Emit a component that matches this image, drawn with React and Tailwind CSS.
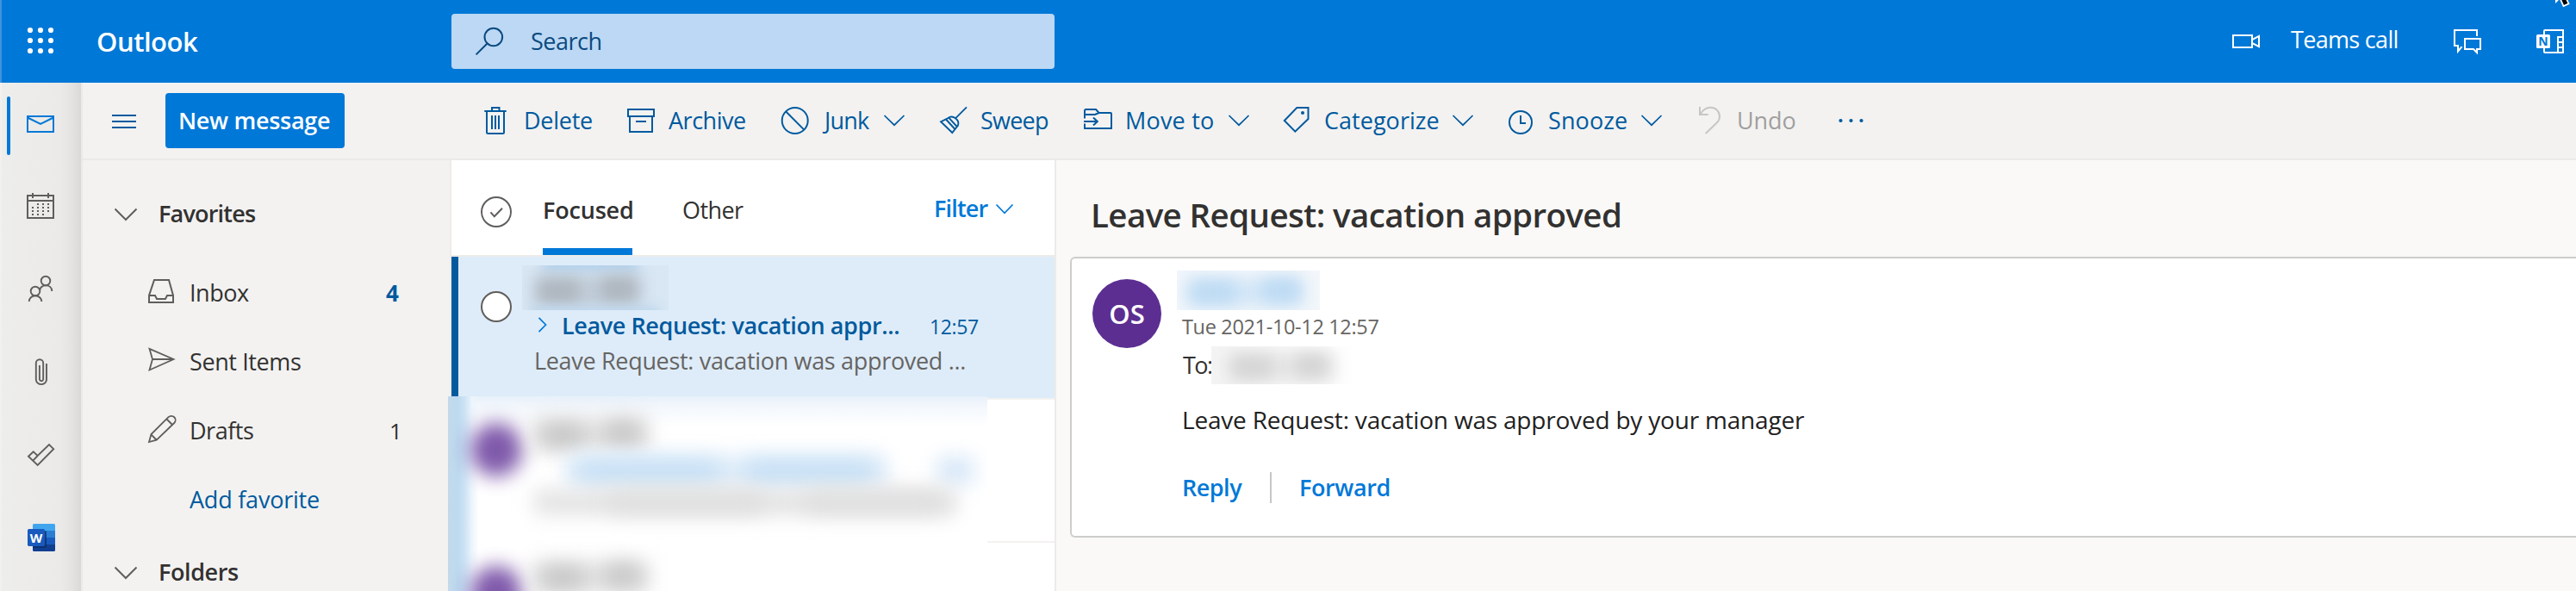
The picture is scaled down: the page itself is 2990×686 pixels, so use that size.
import React from "react";

// Icons share one drawing grid: `box` is "x y width height" on that grid.
function Icon({ box, stroke = 2, className = "", children }) {
  const [, , w, h] = box.split(" ");
  return (
    <svg
      viewBox={box}
      width={w}
      height={h}
      fill="none"
      stroke="currentColor"
      strokeWidth={stroke}
      className={`block shrink-0 ${className}`}
      aria-hidden="true"
    >
      {children}
    </svg>
  );
}

function Chevron({ className = "" }) {
  return (
    <Icon box="0 0 26 40" stroke={1.7} className={className}>
      <path d="M1.5 14L13 25.2L24.5 14" />
    </Icon>
  );
}

function Header() {
  return (
    <header className="relative flex h-24 shrink-0 items-center overflow-hidden border-l-2 border-[#3f93df] bg-[#0078d7] text-white">
      <Icon box="2 24 94 48" stroke={0}>
        {[35, 47, 59].map((y) =>
          [35, 47, 59].map((x) => <circle key={`${x}-${y}`} cx={x} cy={y} r="3.1" fill="currentColor" />)
        )}
      </Icon>
      <span className="ml-4 w-[412px] shrink-0 text-[31px] leading-[42px] font-semibold tracking-[-0.47px]">Outlook</span>
      <div className="flex h-16 w-[700px] shrink-0 items-center rounded bg-[#bcd8f4] text-[#0b4a80]">
        <Icon box="550 28 38 40" className="ml-[26px]">
          <circle cx="572.8" cy="43" r="10.3" />
          <path d="M565.5 50.5L552.6 63.4" />
        </Icon>
        <span className="ml-[28px] text-[27px] leading-10 tracking-[-0.49px]">Search</span>
      </div>
      <Icon box="2588 28 38 40" className="ml-[1364px]">
        <path d="M2592 41H2614V55H2592ZM2614.5 45.8L2622 41.8V54.2L2614.5 50.2" />
      </Icon>
      <span className="-mt-1 ml-[33px] w-[187px] shrink-0 text-[27px] leading-10 tracking-[-0.68px]">Teams call</span>
      <Icon box="2846 28 38 40">
        <path d="M2875 42V35H2849V53H2853V59.5L2857.6 54.2" />
        <path d="M2861 45H2879V57H2875V61L2871 57H2861Z" />
      </Icon>
      <Icon box="2942 28 36 40" className="ml-[58px]">
        <path d="M2953 40V36Q2953 35 2954 35H2975V61H2954Q2953 61 2953 60V56M2969 61V43H2975M2969 49H2975M2969 55H2975" />
        <rect x="2944" y="40" width="16" height="16" rx="1.5" fill="#fff" stroke="none" />
        <text x="2952" y="53" fontSize="14" fontWeight="700" textAnchor="middle" fill="#0078d7" stroke="none">
          N
        </text>
      </Icon>
      <svg viewBox="0 0 24 12" width="24" height="12" className="absolute top-0 left-[2958px]" aria-hidden="true">
        <path d="M6 0V4L10 0Z" fill="#fff" />
        <path d="M11 -3L15.5 7L21.5 4.2L17.5 -4Z" fill="#000" stroke="#fff" strokeWidth="1.8" />
      </svg>
    </header>
  );
}

function AppRail() {
  return (
    <nav className="flex w-24 shrink-0 flex-col border-r-2 border-l-2 border-r-[#ebeae9] border-l-[#f2f1f0] bg-[linear-gradient(to_right,#ededeb_0px,#ebeae8_68px,#e5e4e2_80px,#dad9d7_92px)] text-[#605e5c]">
      <div className="flex h-24 items-center text-[#0078d7]">
        <div className="mt-1 ml-1.5 h-[68px] w-1 rounded-full bg-[#0078d7]" />
        <Icon box="12 96 82 96">
          <path d="M32 135H62V153H32ZM32 136.5L47 144L62 136.5" />
        </Icon>
      </div>
      <Icon box="2 192 92 96">
        <path d="M32 227H62V253H32ZM32 233H62M38 224V230M56 224V230" />
        <path d="M43 237H57M37 241H57M37 245H57M37 249H51" strokeDasharray="2 4" />
      </Icon>
      <Icon box="2 288 92 96" stroke={1.9}>
        <circle cx="53" cy="326" r="5.3" />
        <circle cx="41" cy="338" r="5.3" />
        <path d="M33.7 350A7.3 6.7 0 0 1 48.3 350M46.2 337C46.2 329.8 60.3 329 60.3 338" />
      </Icon>
      <Icon box="2 384 92 96" stroke={1.9}>
        <path d="M54 422V441A6.2 6.2 0 0 1 41.8 441V421.5A4.2 4.2 0 0 1 50.2 421.5V440.5A2.2 2.2 0 0 1 45.9 440.5V424" />
      </Icon>
      <Icon box="2 480 92 96" stroke={1.9}>
        <path d="M33 529.7L38.7 524.3L43.7 529L57 516L62.2 521.2L43.7 540ZM43.7 529L38.3 534.6" />
      </Icon>
      <Icon box="2 576 92 96" stroke={0}>
        <path d="M38 616V609.5Q38 608 39.5 608H62.5Q64 608 64 609.5V616Z" fill="#41a5ee" />
        <path d="M38 616H64V624H38Z" fill="#2b7cd3" />
        <path d="M38 624H64V632H38Z" fill="#185abd" />
        <path d="M38 632H64V638.5Q64 640 62.5 640H39.5Q38 640 38 638.5Z" fill="#103f91" />
        <path d="M38 616H52Q54 616 54 618V634Q54 636 52 636H38Z" fill="#0b2d66" opacity="0.75" />
        <rect x="32" y="614" width="20" height="20" rx="1.7" fill="#185abd" />
        <text x="42" y="629.5" fontSize="15" fontWeight="700" textAnchor="middle" fill="#fff">
          W
        </text>
      </Icon>
    </nav>
  );
}

function Toolbar() {
  return (
    <div className="flex h-[90px] shrink-0 items-center border-b-2 border-[#ebeae8] bg-[#f3f2f1] text-[27px] leading-10 whitespace-nowrap text-[#005a9e]">
      <Icon box="96 120 96 40" stroke={1.8}>
        <path d="M130 134H158M130 141H158M130 148H158" />
      </Icon>
      <button className="flex h-16 w-[208px] shrink-0 items-center rounded bg-[#0078d7] pl-[15px] font-semibold tracking-[-0.3px] text-white">
        New message
      </button>
      <Icon box="560 120 32 40" className="ml-40">
        <path d="M562.3 129H587.7M571 128.5V125H579.5V128.5M565 129V153.5Q565 155 566.5 155H583.5Q585 155 585 153.5V129M571 134V150M575 134V150M579 134V150" />
      </Icon>
      <span className="ml-4 w-[120px] shrink-0 tracking-[-0.27px]">Delete</span>
      <Icon box="728 120 32 40">
        <path d="M729 127H759V135H729ZM731 135V153H757V135M738 141H750" />
      </Icon>
      <span className="ml-4 w-[130px] shrink-0 tracking-[-0.48px]">Archive</span>
      <Icon box="906 120 34 40">
        <circle cx="922.7" cy="140" r="15" />
        <path d="M912 129.3L933.3 150.6" />
      </Icon>
      <span className="ml-[17px] w-[68px] shrink-0 tracking-[-0.79px]">Junk</span>
      <Chevron />
      <Icon box="1090 120 34 40" stroke={1.9} className="ml-[39px]">
        <path d="M1122 124.3L1109.5 136.8M1092 141.3L1100.5 137C1106 132.5 1114 139.5 1112 145.5L1105.3 154ZM1098 138.5L1108.5 150M1101.5 136.8L1110.8 147" />
      </Icon>
      <span className="ml-[14px] w-[118px] shrink-0 tracking-[-0.76px]">Sweep</span>
      <Icon box="1256 120 36 40">
        <path d="M1259 137.5V128.5Q1259 127 1260.5 127H1272L1275.5 131H1289Q1290 131 1290 132V149H1259V143.5M1259 133H1271L1275.5 131M1258 141H1273.5M1269 136.5L1273.8 141L1269 145.5" />
      </Icon>
      <span className="ml-[14px] w-[119px] shrink-0 tracking-[0.2px]">Move to</span>
      <Chevron />
      <Icon box="1488 120 34 40" className="ml-[37px]">
        <path d="M1505.3 125H1518.5V138L1503.3 152.6L1490.8 140Z" />
        <circle cx="1512" cy="131" r="2" fill="currentColor" stroke="none" />
      </Icon>
      <span className="ml-[15px] w-[148px] shrink-0 tracking-[0.03px]">Categorize</span>
      <Chevron />
      <Icon box="1750 120 32 40" className="ml-[39px]">
        <circle cx="1765" cy="142" r="13" />
        <path d="M1765 134V143H1771" />
      </Icon>
      <span className="ml-[15px] w-[107px] shrink-0 tracking-[0.1px]">Snooze</span>
      <Chevron />
      <Icon box="1970 120 30 40" className="ml-10 text-[#c8c6c4]">
        <path d="M1973 124V133H1982.7M1973.5 132.5C1977 127 1981.5 124.8 1985.5 124.8C1991.5 124.8 1996 129.5 1996 135C1996 138 1995 140.2 1993 142.2L1979.7 155" />
      </Icon>
      <span className="ml-4 w-[116px] shrink-0 tracking-[-0.09px] text-[#a19f9d]">Undo</span>
      <Icon box="2132 120 32 40" stroke={0}>
        {[2136.5, 2148.5, 2160.5].map((x) => (
          <circle key={x} cx={x} cy="140" r="2.1" fill="currentColor" />
        ))}
      </Icon>
    </div>
  );
}

function FolderPane() {
  return (
    <aside className="flex w-[426px] shrink-0 flex-col overflow-hidden bg-[#f3f2f1] pt-[22px] text-[27px] leading-10 whitespace-nowrap text-[#323130]">
      <div className="flex h-20 shrink-0 items-center font-semibold">
        <Icon box="132 208 28 80" className="ml-9 text-[#605e5c]">
          <path d="M133.5 242.5L146 255L158.5 242.5" />
        </Icon>
        <span className="ml-6 tracking-[-0.8px]">Favorites</span>
      </div>
      <div className="mt-3 flex h-20 shrink-0 items-center">
        <Icon box="170 300 36 80" className="ml-[74px] text-[#605e5c]">
          <path d="M179 325H196L201 343V351H173V343ZM173 343H180L182 347H192L194 343H201" />
        </Icon>
        <span className="ml-[14px] w-[228px] tracking-[-0.47px]">Inbox</span>
        <span className="text-[26px] font-bold text-[#005a9e]">4</span>
      </div>
      <div className="flex h-20 shrink-0 items-center">
        <Icon box="170 380 36 80" stroke={1.8} className="ml-[74px] text-[#605e5c]">
          <path d="M173.5 404.8L201.5 417L173.5 429.5L177 417ZM177 417H201" />
        </Icon>
        <span className="ml-[14px] tracking-[-0.39px]">Sent Items</span>
      </div>
      <div className="flex h-20 shrink-0 items-center">
        <Icon box="170 460 36 80" stroke={1.8} className="ml-[74px] text-[#605e5c]">
          <path d="M173 513L175.5 504L195.5 484.2A4.6 4.6 0 0 1 202.2 491L181.7 510.7ZM193.5 486.5L200 493M175.5 504.5L181.5 510.5" />
        </Icon>
        <span className="ml-[14px] w-[232px] tracking-[-0.47px]">Drafts</span>
        <span className="text-[26px]">1</span>
      </div>
      <div className="flex h-20 shrink-0 items-center pl-[124px] text-[#005a9e]">
        <span className="tracking-[-0.22px]">Add favorite</span>
      </div>
      <div className="mt-1 flex h-20 shrink-0 items-center font-semibold">
        <Icon box="132 624 28 80" className="ml-9 text-[#605e5c]">
          <path d="M133.5 658.5L146 671L158.5 658.5" />
        </Icon>
        <span className="ml-6 tracking-[-0.4px]">Folders</span>
      </div>
    </aside>
  );
}

// Blurred stand-ins for a redacted message row, positioned inside the redaction panel.
function RedactedRow({ className }) {
  return (
    <div className={`absolute left-0 h-40 w-full ${className}`}>
      <div className="absolute top-[31px] left-[26px] h-[62px] w-[60px] rounded-full bg-[#5f3096] opacity-80 blur-[11px]" />
      <div className="absolute top-[28px] left-[98px] h-[32px] w-[134px] bg-[#e0e0e0] blur-[12px]" />
      <div className="absolute top-[32px] left-[108px] h-[26px] w-[50px] bg-[#c4c4c4] blur-[12px]" />
      <div className="absolute top-[29px] left-[182px] h-[26px] w-[42px] bg-[#c4c4c4] blur-[12px]" />
    </div>
  );
}

function MessageList() {
  return (
    <section className="relative flex w-[704px] shrink-0 flex-col border-x-2 border-[#edebe9] bg-white text-[27px] leading-10 whitespace-nowrap">
      <div className="flex h-28 shrink-0 items-start border-b-2 border-[#edebe9] text-[#323130]">
        <Icon box="556 226 40 40" className="mt-10 ml-8 text-[#605e5c]">
          <circle cx="576" cy="246" r="17" />
          <path d="M569.5 246.3L573.8 251.3L583 241.8" />
        </Icon>
        <div className="ml-[34px] h-[110px] w-[104px] border-b-8 border-[#0078d7] pt-[38px] font-semibold tracking-[-0.19px]">
          Focused
        </div>
        <span className="mt-[38px] ml-[58px] w-[292px] tracking-[-0.59px]">Other</span>
        <span className="mt-9 w-[72px] font-semibold tracking-[-0.83px] text-[#0078d7]">Filter</span>
        <Icon box="1155 226 22 40" stroke={1.7} className="mt-10 -ml-px text-[#0078d7]">
          <path d="M1156.5 237.5L1166 247.3L1175.5 237.5" />
        </Icon>
      </div>

      <div className="flex h-[164px] shrink-0 items-start border-l-8 border-[#005a9e] bg-[#deecf9]">
        <Icon box="556 336 40 40" className="mt-[38px] ml-6 text-[#605e5c]">
          <circle cx="576" cy="356" r="17" fill="#fff" />
        </Icon>
        <div className="mt-2.5 ml-2.5">
          <div className="relative h-[52px] w-[170px] overflow-hidden bg-[#d9e7f4]">
            <div className="absolute -top-3 left-[24px] h-5 w-[110px] bg-[#b5d4f0] blur-[6px]" />
            <div className="absolute top-[12px] left-[14px] h-[36px] w-[124px] bg-[#c0ccd8] blur-[10px]" />
            <div className="absolute top-[17px] left-[20px] h-[26px] w-[46px] bg-[#adb5bd] blur-[9px]" />
            <div className="absolute top-[14px] left-[92px] h-[27px] w-[40px] bg-[#adb5bd] blur-[9px]" />
            <div className="absolute top-[48px] left-[10px] h-4 w-[150px] bg-[#bdd6ec] blur-[6px]" />
          </div>
          <div className="-mt-0.5 flex">
            <Icon box="624 358 12 40" stroke={1.7} className="ml-[18px] text-[#0078d7]">
              <path d="M625.5 368.8L633.5 377L625.5 385.2" />
            </Icon>
            <span className="ml-4 w-[427px] font-semibold tracking-[-0.4px] text-[#005a9e]">
              Leave Request: vacation appr...
            </span>
            <span className="mt-px text-[23px] tracking-[-0.37px] text-[#005a9e]">12:57</span>
          </div>
          <div className="pl-[14px] tracking-[-0.32px] text-[#666462]">Leave Request: vacation was approved ...</div>
        </div>
      </div>
      <div className="h-[168px] shrink-0 border-t-2 border-b-2 border-[#f3f2f1]" />

      <div className="absolute top-[274px] -left-1 h-[226px] w-[626px] overflow-hidden bg-white">
        <div className="absolute inset-x-0 top-0 h-9 bg-[linear-gradient(to_bottom,#e8f0fa,#f5f9fd_40%,#ffffff)]" />
        <div className="absolute inset-y-0 left-0 w-9 bg-[linear-gradient(to_right,#c3d9ea_0px,#bddaf0_12px,#cfe4f5_20px,#ecf5fc_28px,#ffffff00_36px)]" />
        <RedactedRow className="top-0" />
        <div className="absolute top-[69px] left-[136px] h-[36px] w-[374px] bg-[#e0eefa] blur-[11px]" />
        <div className="absolute top-[74px] left-[150px] h-[26px] w-[165px] bg-[#c6dff5] blur-[12px]" />
        <div className="absolute top-[74px] left-[345px] h-[26px] w-[150px] bg-[#c6dff5] blur-[12px]" />
        <div className="absolute top-[70px] left-[568px] h-[32px] w-[42px] bg-[#d8e8f8] blur-[11px]" />
        <div className="absolute top-[108px] left-[100px] h-[30px] w-[490px] bg-[#e4e4e4] blur-[11px]" />
        <div className="absolute top-[112px] left-[186px] h-[22px] w-[180px] bg-[#dedede] blur-[12px]" />
        <div className="absolute top-[112px] left-[415px] h-[22px] w-[160px] bg-[#dedede] blur-[12px]" />
        <RedactedRow className="top-[166px]" />
      </div>
    </section>
  );
}

function ReadingPane() {
  return (
    <main className="flex flex-1 flex-col overflow-hidden bg-[#faf9f8] pt-[37px] whitespace-nowrap">
      <h1 className="pl-10 text-[38.5px] leading-[52px] font-semibold tracking-[-0.6px] text-[#323130]">
        Leave Request: vacation approved
      </h1>
      <article className="mt-[23px] ml-4 flex h-[326px] items-start rounded-l-md border-y-2 border-l-2 border-[#cdcdcc] bg-white">
        <div className="mt-6 ml-6 flex size-20 items-center justify-center rounded-full bg-[#5c2e91] text-[31px] leading-[42px] font-semibold text-white">
          OS
        </div>
        <div className="mt-3.5 ml-[18px]">
          <div className="relative h-[46px] w-[166px] overflow-hidden bg-[#f3f7fb]">
            <div className="absolute top-[9px] left-[10px] h-[32px] w-[136px] bg-[#d2e6f7] blur-[10px]" />
            <div className="absolute top-[13px] left-[18px] h-[25px] w-[50px] bg-[#bcdaf3] blur-[9px]" />
            <div className="absolute top-[10px] left-[100px] h-[26px] w-[42px] bg-[#bcdaf3] blur-[9px]" />
          </div>
          <div className="mt-[3px] pl-1.5 text-[23.5px] leading-8 tracking-[-0.34px] text-[#666462]">Tue 2021-10-12 12:57</div>
          <div className="mt-[7px] flex h-11 pl-[7px] text-[27px] leading-[37px] text-[#323130]">
            <span className="mt-[3px] w-[33px] overflow-hidden tracking-[-1.6px]">To:</span>
            <div className="relative h-11 w-[170px] overflow-hidden bg-[linear-gradient(to_right,#f4f4f4,#ffffff)]">
              <div className="absolute top-[8px] left-[18px] h-[32px] w-[124px] bg-[#e4e4e4] blur-[10px]" />
              <div className="absolute top-[12px] left-[26px] h-[24px] w-[44px] bg-[#d4d4d4] blur-[9px]" />
              <div className="absolute top-[10px] left-[98px] h-[25px] w-[36px] bg-[#d4d4d4] blur-[9px]" />
            </div>
          </div>
          <p className="mt-[22px] pl-1.5 text-[28px] leading-[38px] tracking-[-0.2px] text-[#212121]">
            Leave Request: vacation was approved by your manager
          </p>
          <div className="mt-[42px] flex h-9 pl-1.5 text-[27px] leading-[37px] font-semibold text-[#0078d7]">
            <span className="-mt-px w-[102px] tracking-[-0.5px]">Reply</span>
            <div className="h-9 w-0.5 bg-[#c8c6c4]" />
            <span className="-mt-px ml-8 tracking-[-0.4px]">Forward</span>
          </div>
        </div>
      </article>
    </main>
  );
}

export default function App() {
  return (
    <div className="flex h-[686px] w-[2990px] flex-col overflow-hidden bg-[#f3f2f1] font-['Open_Sans','Noto_Sans',sans-serif]">
      <Header />
      <div className="flex min-h-0 flex-1">
        <AppRail />
        <div className="flex min-w-0 flex-1 flex-col">
          <Toolbar />
          <div className="flex min-h-0 flex-1">
            <FolderPane />
            <MessageList />
            <ReadingPane />
          </div>
        </div>
      </div>
    </div>
  );
}
